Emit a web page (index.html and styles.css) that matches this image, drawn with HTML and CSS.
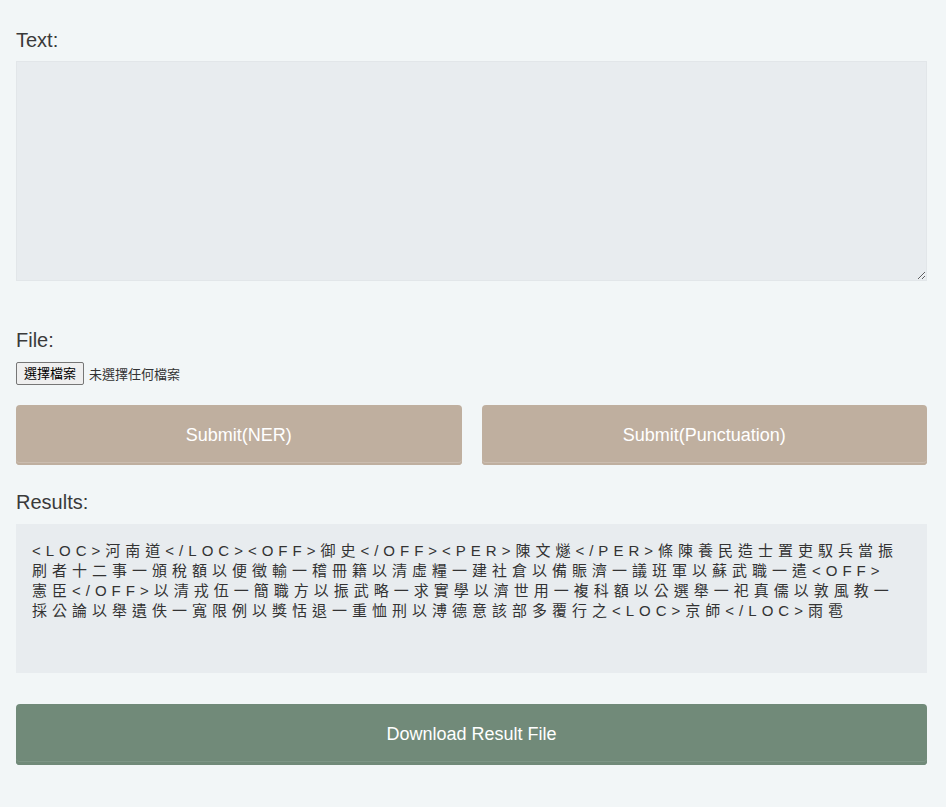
FILE: index.html
```html
<!DOCTYPE html>
<html lang="zh-Hant">
<head>
<meta charset="utf-8">
<title>NER</title>
<link rel="stylesheet" href="styles.css">
</head>
<body>
<main class="page">
  <label class="field-label" for="text">Text:</label>
  <textarea id="text" class="text-input"></textarea>

  <div class="field-label file-label">File:</div>
  <div class="file-row">
    <span class="file-btn">選擇檔案</span>
    <span class="file-name">未選擇任何檔案</span>
  </div>

  <div class="actions">
    <button class="btn btn-tan">Submit(NER)</button>
    <button class="btn btn-tan">Submit(Punctuation)</button>
  </div>

  <div class="field-label results-label">Results:</div>
  <div class="results">&lt;LOC&gt;河南道&lt;/LOC&gt;&lt;OFF&gt;御史&lt;/OFF&gt;&lt;PER&gt;陳文燧&lt;/PER&gt;條陳養民造士置吏馭兵當振刷者十二事一頒稅額以便徵輸一稽冊籍以清虛糧一建社倉以備賑濟一議班軍以蘇武職一遣&lt;OFF&gt;憲臣&lt;/OFF&gt;以清戎伍一簡職方以振武略一求實學以濟世用一複科額以公選舉一祀真儒以敦風教一採公論以舉遺佚一寬限例以獎恬退一重恤刑以溥德意該部多覆行之&lt;LOC&gt;京師&lt;/LOC&gt;雨雹</div>

  <button class="btn btn-green download">Download Result File</button>
</main>
</body>
</html>
```

FILE: styles.css
```css
html, body {
  margin: 0;
  padding: 0;
  background: #f2f6f7;
}

body {
  font-family: "Liberation Sans", Arial, "Noto Sans CJK TC", sans-serif;
  color: #333;
}

.page {
  padding: 29px 19px 0 16px;
  display: flex;
  flex-direction: column;
}

.field-label {
  display: block;
  font-size: 20px;
  line-height: 23px;
  color: #3a3a3a;
  margin-bottom: 9px;
}

.text-input {
  display: block;
  box-sizing: border-box;
  width: 100%;
  height: 220px;
  margin: 0;
  background: #e8ecef;
  border: 1px solid #e2e6e9;
  border-radius: 0;
  outline: none;
  padding: 8px;
  font-family: inherit;
}

.file-label {
  margin-top: 48px;
  margin-bottom: 10px;
}

.file-row {
  display: flex;
  align-items: center;
  height: 23px;
  font-family: "Liberation Sans", "Noto Sans CJK TC", sans-serif;
  font-size: 13px;
}

.file-btn {
  box-sizing: border-box;
  height: 23px;
  line-height: 21px;
  padding: 0 7px;
  border: 1px solid #767676;
  border-radius: 2px;
  background: #efefef;
  color: #000;
}

.file-name {
  margin-left: 5px;
  color: #333;
}

.actions {
  display: flex;
  gap: 20px;
  margin-top: 20px;
}

.btn {
  flex: 1;
  height: 60px;
  border: 0;
  border-radius: 4px;
  font-family: "Liberation Sans", Arial, sans-serif;
  font-size: 18px;
  color: #fff;
  padding: 0;
  cursor: pointer;
}

.btn-tan {
  background: #bfaf9f;
  box-shadow: inset 0 -2px 0 #bfaf9f, inset 0 -3px 0 #cbbdb0;
}

.btn-green {
  background: #718a79;
  box-shadow: inset 0 -3px 0 #718a79, inset 0 -4px 0 #7e9686;
}

.results-label {
  margin-top: 26px;
  margin-bottom: 10px;
}

.results {
  box-sizing: border-box;
  min-height: 149px;
  padding: 17px 23px 16px 16px;
  background: #e8ecef;
  font-family: "Liberation Sans", "Noto Sans CJK TC", sans-serif;
  font-size: 15px;
  line-height: 20px;
  letter-spacing: 5px;
  color: #333;
  word-break: break-all;
}

.download {
  flex: none;
  height: 61px;
  width: 100%;
  margin-top: 31px;
}
```
